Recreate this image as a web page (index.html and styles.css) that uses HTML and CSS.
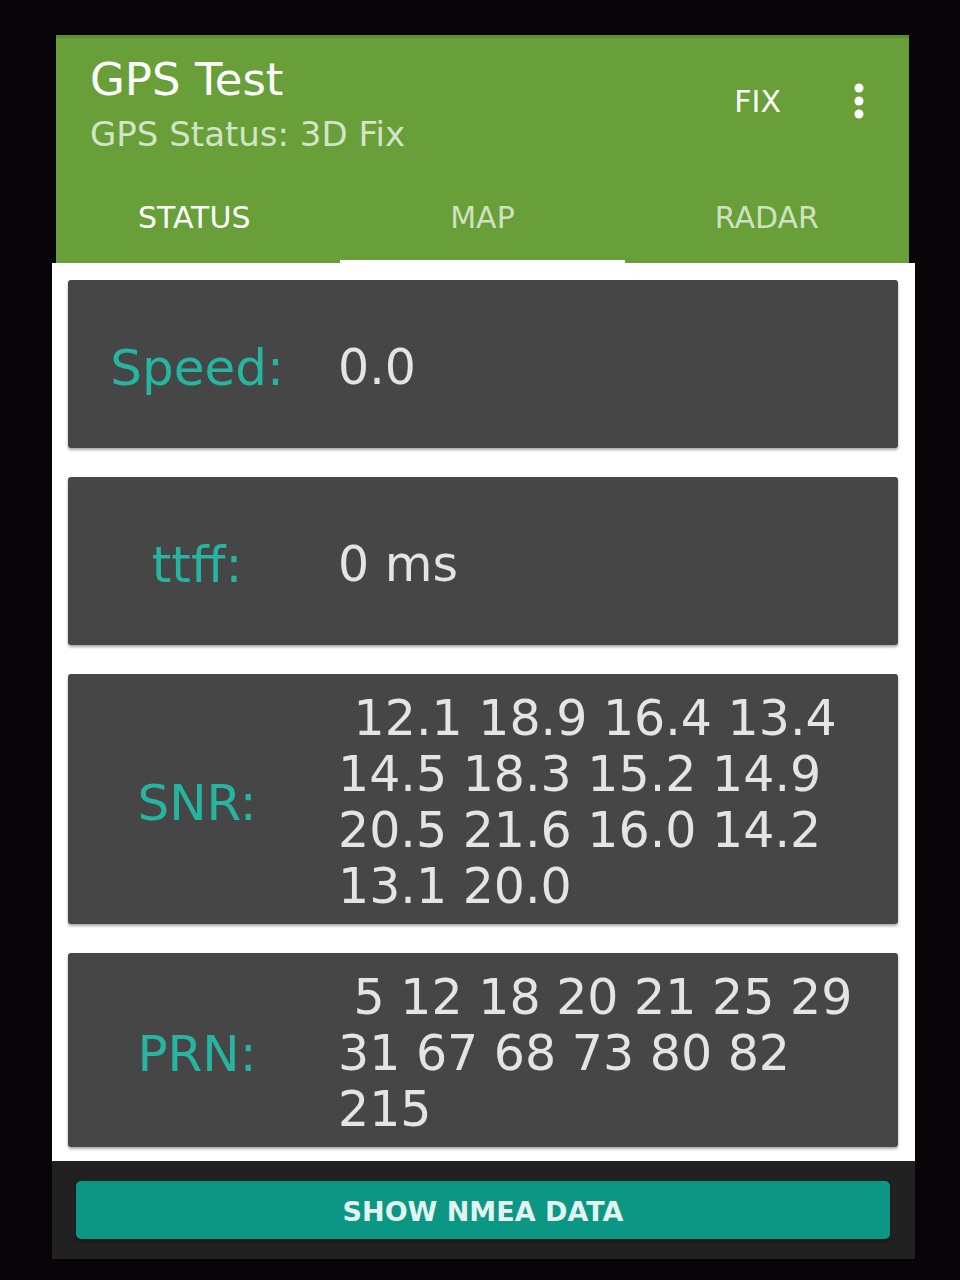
FILE: index.html
```html
<!DOCTYPE html>
<html>
<head>
    <title>GPS Test</title>
    <link rel="stylesheet" href="styles.css">
</head>
<body>
    <div class="phone">
        <header class="appbar">
            <div class="appbar__top">
                <div class="appbar__titles">
                    <h1 class="appbar__title">GPS Test</h1>
                    <p class="appbar__subtitle">GPS Status: 3D Fix</p>
                </div>
                <div class="appbar__actions">
                    <span class="appbar__fix">FIX</span>
                    <svg class="appbar__menu" width="10" height="36" viewBox="0 0 10 36">
                        <circle cx="5" cy="5" r="4.5" fill="#fff"/>
                        <circle cx="5" cy="18" r="4.5" fill="#fff"/>
                        <circle cx="5" cy="31" r="4.5" fill="#fff"/>
                    </svg>
                </div>
            </div>
            <nav class="tabs">
                <div class="tabs__item tabs__item--active">STATUS</div>
                <div class="tabs__item tabs__item--indicator">MAP</div>
                <div class="tabs__item">RADAR</div>
            </nav>
        </header>

        <main class="content">
            <div class="card">
                <div class="card__label">Speed:</div>
                <div class="card__value">0.0</div>
            </div>
            <div class="card">
                <div class="card__label">ttff:</div>
                <div class="card__value">0 ms</div>
            </div>
            <div class="card">
                <div class="card__label">SNR:</div>
                <div class="card__value">&nbsp;12.1 18.9 16.4 13.4 14.5 18.3 15.2 14.9 20.5 21.6 16.0 14.2 13.1 20.0</div>
            </div>
            <div class="card">
                <div class="card__label">PRN:</div>
                <div class="card__value">&nbsp;5 12 18 20 21 25 29 31 67 68 73 80 82 215</div>
            </div>
        </main>

        <footer class="bottombar">
            <button class="nmea">SHOW NMEA DATA</button>
        </footer>
    </div>
</body>
</html>
```

FILE: styles.css
```css
*, ::after, ::before {
    box-sizing: border-box;
}

body {
    margin: 0;
    padding-top: 35px;
    background: #090407;
    font-family: "DejaVu Sans", Arial, sans-serif;
    min-height: 1280px;
}

.phone {
    width: 863px;
    margin-left: 52px;
}

/* app bar */

.appbar {
    margin: 0 6px 0 4px;
    background: #689f38;
    border-top: 3px solid #5c8f31;
    color: #fff;
}

.appbar__top {
    display: flex;
    justify-content: space-between;
    height: 134px;
    padding: 16px 45px 0 34px;
}

.appbar__title {
    margin: 0;
    font-size: 45px;
    font-weight: normal;
    line-height: 52px;
}

.appbar__subtitle {
    margin: 8px 0 0;
    font-size: 34px;
    line-height: 40px;
    color: rgba(255, 255, 255, .72);
}

.appbar__actions {
    display: flex;
    align-items: center;
    gap: 73px;
    height: 40px;
    margin-top: 27px;
}

.appbar__fix {
    font-size: 30px;
}

.tabs {
    display: grid;
    grid-template-columns: 1fr 1fr 1fr;
    height: 91px;
}

.tabs__item {
    display: flex;
    align-items: center;
    justify-content: center;
    font-size: 30px;
    color: rgba(255, 255, 255, .7);
}

.tabs__item--active {
    color: #fff;
    padding-right: 8px;
}

.tabs__item--indicator {
    border-bottom: 3px solid #fff;
    padding-top: 3px;
}

/* cards */

.content {
    display: flex;
    flex-direction: column;
    gap: 29px;
    background: #fff;
    padding: 17px 17px 14px 16px;
}

.card {
    display: grid;
    grid-template-columns: 258px 1fr;
    align-items: center;
    min-height: 168px;
    padding: 17px 0 9px;
    background: #464646;
    border-radius: 3px;
    box-shadow: 0 2px 3px rgba(0, 0, 0, .35);
}

.card__label {
    text-align: center;
    font-size: 50px;
    color: #25b5a0;
}

.card__value {
    padding: 0 30px 0 12px;
    font-size: 49px;
    line-height: 56px;
    color: #e4e4e4;
}

/* bottom bar */

.bottombar {
    background: #212121;
    padding: 20px 25px 20px 24px;
}

.nmea {
    display: block;
    width: 100%;
    height: 58px;
    padding-top: 4px;
    border: none;
    border-radius: 5px;
    background: #0b9784;
    color: #e3f4f0;
    font-family: "DejaVu Sans", Arial, sans-serif;
    font-size: 27px;
    font-weight: bold;
    box-shadow: 0 2px 3px rgba(0, 0, 0, .4);
}
```
